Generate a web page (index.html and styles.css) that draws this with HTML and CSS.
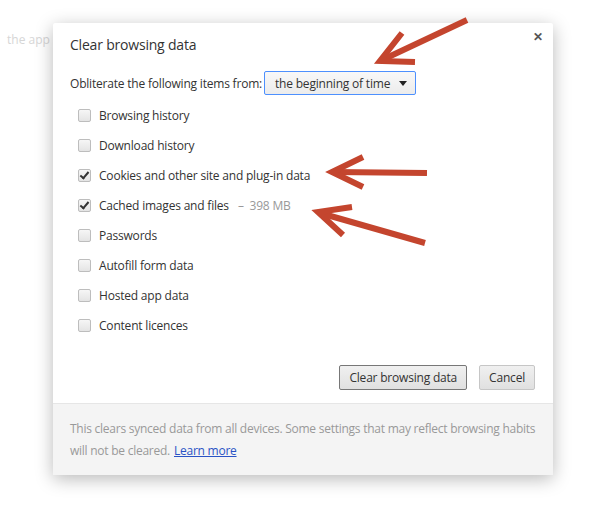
FILE: index.html
```html
<!DOCTYPE html>
<html lang="en">
<head>
    <meta charset="UTF-8">
    <meta name="viewport" content="width=device-width, initial-scale=1.0">
    <title>Clear browsing data</title>
    <link rel="stylesheet" href="styles.css">
</head>
<body>
    <div class="backdrop">
        <p class="page-text">the app is</p>
    </div>

    <div class="dialog">
        <div class="dialog-body">
            <h1 class="title">Clear browsing data</h1>
            <span class="close">&#x2715;</span>

            <div class="period">
                <label for="period">Obliterate the following items from:</label>
                <div class="select" id="period">
                    <span>the beginning of time</span>
                    <span class="caret"></span>
                </div>
            </div>

            <ul class="options">
                <li><span class="box"></span>Browsing history</li>
                <li><span class="box"></span>Download history</li>
                <li><span class="box checked"></span>Cookies and other site and plug-in data</li>
                <li><span class="box checked"></span>Cached images and files<span class="size">&ndash;&nbsp; 398 MB</span></li>
                <li><span class="box"></span>Passwords</li>
                <li><span class="box"></span>Autofill form data</li>
                <li><span class="box"></span>Hosted app data</li>
                <li><span class="box"></span>Content licences</li>
            </ul>

            <div class="actions">
                <button class="btn default">Clear browsing data</button>
                <button class="btn">Cancel</button>
            </div>
        </div>
        <div class="dialog-footer">
            <p>This clears synced data from all devices. Some settings that may reflect browsing habits
            will not be cleared.<a href="#">Learn more</a></p>
        </div>
    </div>

    <!-- annotation arrows drawn on top of the screenshot -->
    <svg class="arrows" width="591" height="512" viewBox="0 0 591 512">
        <g stroke="#c4452e" stroke-width="6" fill="none" stroke-linecap="butt" stroke-linejoin="miter">
            <path d="M467 20 L382 60"/>
            <path d="M402 33 L380 61 L415 62"/>
            <path d="M427 173 L334 172"/>
            <path d="M363 157 L332 172 L363 187"/>
            <path d="M425 243 L320 213"/>
            <path d="M352 207 L318 212 L343 235"/>
        </g>
    </svg>
</body>
</html>
```

FILE: styles.css
```css
body {
    margin: 0;
    width: 591px;
    height: 512px;
    background: #ffffff;
    font-family: "Open Sans", "Noto Sans", Arial, sans-serif;
    color: #333;
    overflow: hidden;
}
.backdrop {
    padding: 31px 0 0 7px;
}
.page-text {
    margin: 0;
    font-size: 12px;
    color: #d6d6d6;
}
.dialog {
    position: absolute;
    left: 53px;
    top: 23px;
    width: 500px;
    background: #fff;
    border-radius: 2px;
    box-shadow: 0 4px 18px rgba(0, 0, 0, 0.28);
}
.dialog-body {
    position: relative;
    padding: 12px 17px 13px 17px;
    font-size: 12px;
    letter-spacing: -0.2px;
}
.title {
    margin: 0;
    font-size: 14px;
    font-weight: normal;
    letter-spacing: -0.2px;
    color: #333;
    line-height: 20px;
}
.close {
    position: absolute;
    right: 10px;
    top: 5px;
    font-size: 12px;
    font-weight: bold;
    color: #555;
}
.period {
    display: flex;
    align-items: center;
    gap: 2px;
    margin-top: 16px;
}
.select {
    display: flex;
    align-items: center;
    justify-content: space-between;
    width: 132px;
    height: 22px;
    padding: 0 8px 0 10px;
    border: 1px solid #4d90fe;
    border-radius: 2px;
    background: linear-gradient(#f8f8f8, #ececec);
    white-space: nowrap;
}
.caret {
    width: 0;
    height: 0;
    border-left: 4px solid transparent;
    border-right: 4px solid transparent;
    border-top: 5px solid #222;
}
.options {
    list-style: none;
    margin: 5px 0 0 8px;
    padding: 0;
}
.options li {
    display: flex;
    align-items: center;
    height: 30px;
}
.box {
    position: relative;
    width: 11px;
    height: 11px;
    margin-right: 8px;
    border: 1px solid #bdbdbd;
    border-radius: 2px;
    background: linear-gradient(#f6f6f6, #e4e4e4);
}
.box.checked::after {
    content: "";
    position: absolute;
    left: 3px;
    top: 0;
    width: 3px;
    height: 7px;
    border-right: 2px solid #333;
    border-bottom: 2px solid #333;
    transform: rotate(40deg);
}
.size {
    margin-left: 9px;
    color: #999;
}
.actions {
    display: flex;
    justify-content: flex-end;
    gap: 12px;
    margin-top: 25px;
    padding-right: 1px;
}
.btn {
    height: 25px;
    padding: 0 9px;
    font-family: inherit;
    font-size: 12px;
    letter-spacing: -0.2px;
    color: #333;
    border: 1px solid #c6c6c6;
    border-radius: 2px;
    background: linear-gradient(#f0f0f0, #e0e0e0);
}
.btn.default {
    border-color: #777;
}
.dialog-footer {
    padding: 14px 17px 13px 17px;
    border-top: 1px solid #e6e6e6;
    background: #f4f4f4;
    font-size: 12px;
    letter-spacing: -0.25px;
    line-height: 22px;
    color: #999;
}
.dialog-footer p {
    margin: 0;
}
.dialog-footer a {
    display: inline-block;
    margin-left: 4px;
    color: #2a53c5;
}
.arrows {
    position: absolute;
    left: 0;
    top: 0;
    pointer-events: none;
}
```
